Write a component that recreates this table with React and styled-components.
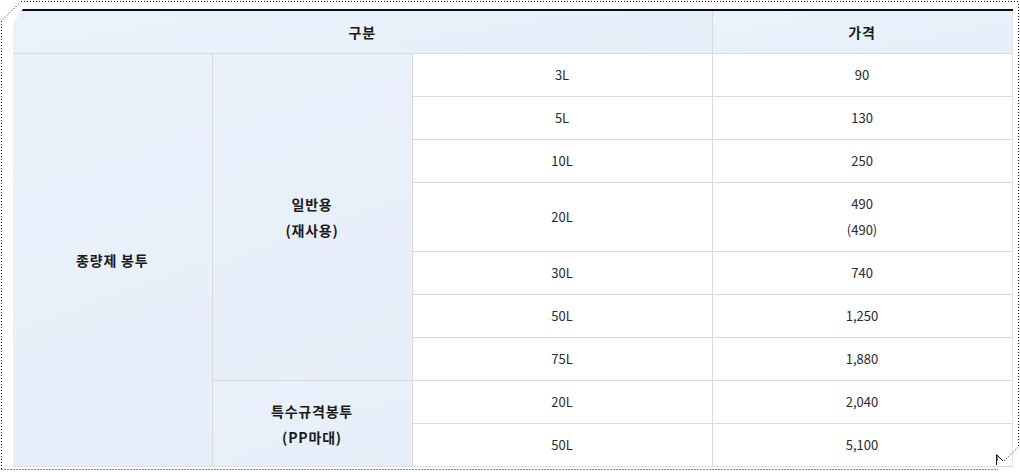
import React from "react";
import styled, { createGlobalStyle } from "styled-components";

const GlobalStyle = createGlobalStyle`
  html, body {
    margin: 0;
    padding: 0;
    background: #ffffff;
  }
  body {
    font-family: "Noto Sans CJK KR", "Noto Sans", "Liberation Sans", sans-serif;
    color: #222222;
  }
`;

const Page = styled.div`
  position: relative;
  width: 1020px;
  height: 472px;
  overflow: hidden;
  padding: 9px 0 0 13px;
  box-sizing: border-box;
`;

const Table = styled.table`
  width: 999px;
  border-collapse: collapse;
  table-layout: fixed;
  border-top: 2px solid #0b0b12;
  font-size: 13px;
`;

const Cell = styled.td`
  height: ${(p) => p.$h || 42}px;
  padding: 0;
  text-align: center;
  vertical-align: middle;
  line-height: 26px;
  border: 1px solid #d9d9df;
  border-top: none;
  background: ${(p) => (p.$shade ? "linear-gradient(160deg, #eaf1fb 0%, #e6eef9 100%)" : "#ffffff")};
  font-size: ${(p) => (p.$bold ? 14 : 13)}px;
  letter-spacing: ${(p) => (p.$bold ? "0.8px" : "0")};
  font-weight: ${(p) => (p.$bold ? 700 : 400)};
  color: ${(p) => (p.$bold ? "#1a1a1a" : "#2a2a2a")};
  &:first-child {
    border-left: none;
  }
  &:last-child {
    border-right: 1px solid #e4e4ea;
  }
`;

const HeadCell = styled.th`
  height: 42px;
  padding: 0;
  text-align: center;
  vertical-align: middle;
  font-size: 14px;
  letter-spacing: 0.8px;
  font-weight: 700;
  color: #1a1a1a;
  background: linear-gradient(170deg, #eaf2fc 0%, #e6eff9 100%);
  border-bottom: 1px solid #d9d9df;
  border-left: 1px solid #d9d9df;
  &:first-child {
    border-left: none;
  }
  &:last-child {
    border-right: 1px solid #e4e4ea;
  }
`;

const Frame = styled.svg`
  position: absolute;
  left: 0;
  top: 0;
  pointer-events: none;
`;

const general = [
  ["3L", "90"],
  ["5L", "130"],
  ["10L", "250"],
  ["20L", "490", "(490)"],
  ["30L", "740"],
  ["50L", "1,250"],
  ["75L", "1,880"],
];

const special = [
  ["20L", "2,040"],
  ["50L", "5,100"],
];

export default function App() {
  return (
    <>
      <GlobalStyle />
      <Page>
        <Table>
          <colgroup>
            <col style={{ width: 199 }} />
            <col style={{ width: 200 }} />
            <col style={{ width: 300 }} />
            <col style={{ width: 300 }} />
          </colgroup>
          <thead>
            <tr>
              <HeadCell colSpan={3}>구분</HeadCell>
              <HeadCell>가격</HeadCell>
            </tr>
          </thead>
          <tbody>
            {general.map(([size, price, extra], i) => (
              <tr key={size}>
                {i === 0 && (
                  <Cell $shade $bold rowSpan={general.length + special.length}>
                    종량제 봉투
                  </Cell>
                )}
                {i === 0 && (
                  <Cell $shade $bold rowSpan={general.length}>
                    일반용
                    <br />
                    (재사용)
                  </Cell>
                )}
                <Cell $h={extra ? 68 : 42}>{size}</Cell>
                <Cell $h={extra ? 68 : 42}>
                  {price}
                  {extra && <br />}
                  {extra}
                </Cell>
              </tr>
            ))}
            {special.map(([size, price], i) => (
              <tr key={"s" + size}>
                {i === 0 && (
                  <Cell $shade $bold rowSpan={special.length}>
                    특수규격봉투
                    <br />
                    (PP마대)
                  </Cell>
                )}
                <Cell>{size}</Cell>
                <Cell>{price}</Cell>
              </tr>
            ))}
          </tbody>
        </Table>
        <Frame width="1020" height="472" viewBox="0 0 1020 472">
          <polygon points="0,0 23,0 13,10 13,23 0,23" fill="#ffffff" />
          <polygon points="13,23 23,9 13,9" fill="#ffffff" />
          <rect x="1013" y="0" width="7" height="472" fill="#ffffff" />
          <rect x="0" y="467" width="1020" height="5" fill="#ffffff" />
          <g stroke="#111" strokeWidth="1" strokeDasharray="1 2" fill="none">
            <path d="M21 1.5 H1019" />
            <path d="M18.5 4 L1.5 21 V470" />
            <path d="M1.5 469.5 H998" />
            <path d="M1018.5 4 V447 L1004 461" />
          </g>
          <path
            d="M996.5 454.5 V465 M997 455 L1003 461 M997 455 L997 461"
            stroke="#111"
            strokeWidth="1"
            fill="none"
          />
        </Frame>
      </Page>
    </>
  );
}
